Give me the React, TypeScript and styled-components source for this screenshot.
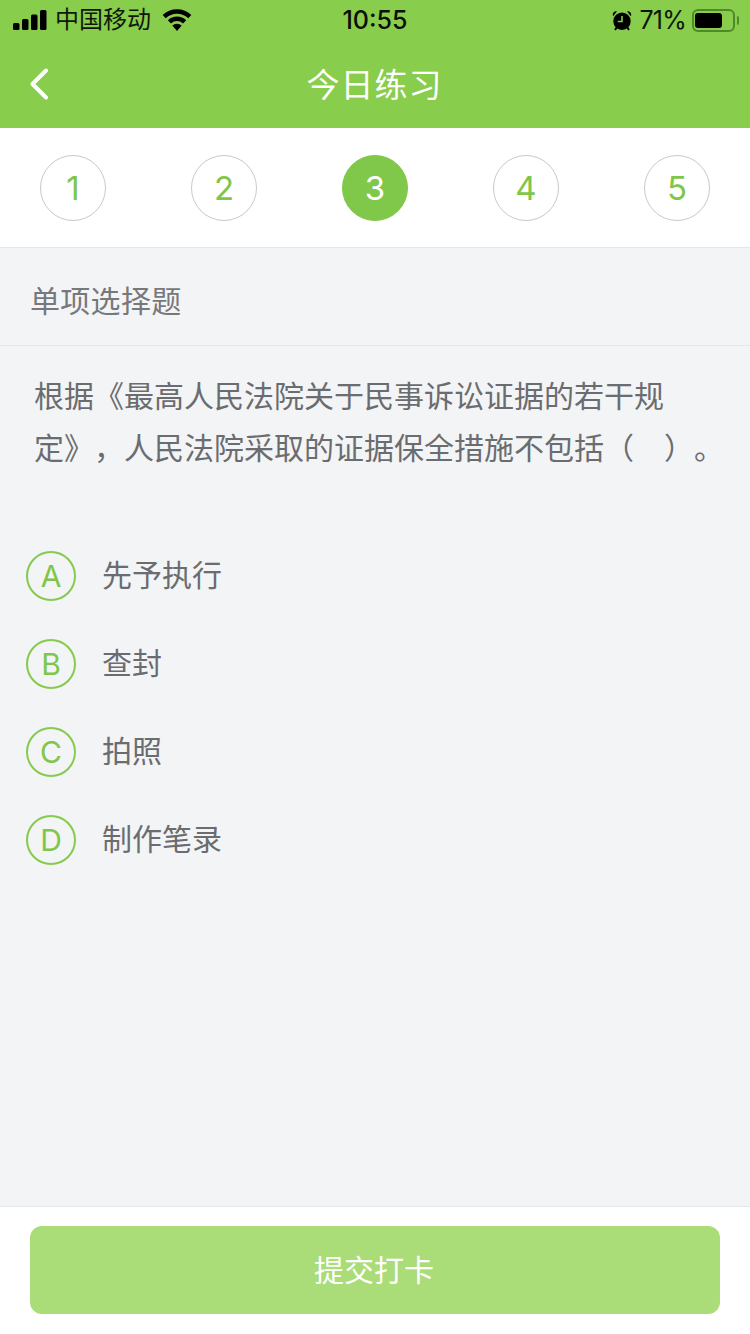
import React from 'react';
import styled, { createGlobalStyle } from 'styled-components';

const steps = [1, 2, 3, 4, 5];
const current = 3;

const options = [
  { key: 'A', text: '先予执行' },
  { key: 'B', text: '查封' },
  { key: 'C', text: '拍照' },
  { key: 'D', text: '制作笔录' },
];

export default function App() {
  return (
    <Page>
      <GlobalStyle />
      <Header>
        <StatusBar>
          <StatusSide>
            <Signal viewBox="0 0 34 20">
              <rect x="0" y="13" width="6.500" height="7" rx="1.500" />
              <rect x="9" y="9" width="6.500" height="11" rx="1.500" />
              <rect x="18" y="4.500" width="6.500" height="15.500" rx="1.500" />
              <rect x="27" y="0" width="6.500" height="20" rx="1.500" />
            </Signal>
            <Carrier>中国移动</Carrier>
            <WifiIcon viewBox="0 0 30 22">
              <path className="arc" d="M2.200 7.600A18.500 18.500 0 0 1 27.800 7.600" />
              <path className="arc" d="M7.400 12.800A11 11 0 0 1 22.600 12.800" />
              <path d="M15 22 10.300 16.600A6.800 6.800 0 0 1 19.700 16.600z" />
            </WifiIcon>
          </StatusSide>
          <Clock>10:55</Clock>
          <StatusSide>
            <AlarmIcon viewBox="0 0 20 21">
              <path d="M1.200 6.200C-.200 3.800 1.800.600 5 1.200z" />
              <path d="M18.800 6.200C20.200 3.800 18.200.600 15 1.200z" />
              <path d="M4.300 16.200 2.200 19.200 3.600 20.400 6 17.800zM15.700 16.200 17.800 19.200 16.400 20.400 14 17.800z" />
              <path
                fillRule="evenodd"
                d="M10 2.500a8.700 8.700 0 1 0 0 17.400 8.700 8.700 0 0 0 0-17.400zM9.200 6h1.600v6.200H5.800v-1.500h3.400z"
              />
            </AlarmIcon>
            <Percent>71%</Percent>
            <Battery>
              <BatteryLevel $level={73} />
              <BatteryCap />
            </Battery>
          </StatusSide>
        </StatusBar>
        <NavBar>
          <BackIcon viewBox="0 0 20 32">
            <path d="M17 2.500 3.500 16 17 29.500" />
          </BackIcon>
          <Title>今日练习</Title>
        </NavBar>
      </Header>

      <StepBar>
        {steps.map((n) => (
          <Step key={n} $active={n === current}>
            {n}
          </Step>
        ))}
      </StepBar>

      <Content>
        <QuestionType>单项选择题</QuestionType>
        <Question>
          根据《最高人民法院关于民事诉讼证据的若干规定》，人民法院采取的证据保全措施不包括（　）。
        </Question>
        <OptionList>
          {options.map((o) => (
            <OptionRow key={o.key}>
              <OptionBadge>{o.key}</OptionBadge>
              <OptionText>{o.text}</OptionText>
            </OptionRow>
          ))}
        </OptionList>
      </Content>

      <Footer>
        <SubmitButton type="button">提交打卡</SubmitButton>
      </Footer>
    </Page>
  );
}

const GlobalStyle = createGlobalStyle`
  html, body {
    margin: 0;
    padding: 0;
    background: #f3f4f6;
  }

  * {
    box-sizing: border-box;
  }
`;

const Page = styled.div`
  width: 750px;
  height: 1334px;
  display: flex;
  flex-direction: column;
  overflow: hidden;
  background: #f3f4f6;
  font-family: "Liberation Sans", "Noto Sans CJK SC", sans-serif;
  text-spacing-trim: space-all;
`;

const Header = styled.header`
  height: 128px;
  background: #88cd4c;
  display: flex;
  flex-direction: column;
`;

const StatusBar = styled.div`
  height: 40px;
  padding: 0 13px;
  display: flex;
  align-items: center;
  justify-content: space-between;
  position: relative;
  color: #0a0f04;
`;

const StatusSide = styled.div`
  display: flex;
  align-items: center;
`;

const Signal = styled.svg`
  width: 34px;
  height: 20px;
  fill: #000;
`;

const Carrier = styled.span`
  margin-left: 8px;
  font-size: 24px;
  line-height: 40px;
  color: #10180a;
`;

const WifiIcon = styled.svg`
  width: 30px;
  height: 22px;
  margin-left: 11px;
  fill: #000;

  .arc {
    fill: none;
    stroke: #000;
    stroke-width: 4.500;
  }
`;

const Clock = styled.span`
  position: absolute;
  left: 0;
  right: 0;
  text-align: center;
  font-size: 25px;
  font-weight: 500;
  font-family: "Inter", "Liberation Sans", sans-serif;
  line-height: 42px;
`;

const AlarmIcon = styled.svg`
  width: 20px;
  height: 21px;
  fill: #000;
`;

const Percent = styled.span`
  margin-left: 7px;
  font-size: 25px;
  font-family: "Inter", "Liberation Sans", sans-serif;
  font-weight: 400;
  letter-spacing: -0.75px;
  color: #0e1608;
`;

const Battery = styled.div`
  position: relative;
  width: 43px;
  height: 23px;
  margin: 0 2px 0 6px;
  padding: 2px 1px;
  border: 2px solid #4f8a2a;
  border-radius: 6px;
`;

const BatteryLevel = styled.div<{ $level: number }>`
  width: ${(props) => props.$level}%;
  height: 100%;
  background: #000;
  border-radius: 3px;
`;

const BatteryCap = styled.div`
  position: absolute;
  right: -6px;
  top: 5px;
  width: 2px;
  height: 9px;
  border-radius: 0 2px 2px 0;
  background: #4f8a2a;
`;

const NavBar = styled.div`
  flex: 1;
  position: relative;
  display: flex;
  align-items: center;
  justify-content: center;
`;

const BackIcon = styled.svg`
  position: absolute;
  left: 29px;
  top: 28px;
  width: 20px;
  height: 32px;
  fill: none;
  stroke: #fff;
  stroke-width: 4;
  stroke-linecap: round;
  stroke-linejoin: round;
`;

const Title = styled.h1`
  margin: 0 1px 0 0;
  font-size: 33px;
  font-weight: 400;
  color: #fff;
  letter-spacing: 1px;
  position: relative;
  top: -1px;
`;

const StepBar = styled.div`
  height: 120px;
  padding: 27px 40px 0;
  display: flex;
  justify-content: space-between;
  background: #fff;
  border-bottom: 1px solid #e6e6e8;
`;

const Step = styled.div<{ $active: boolean }>`
  width: 66px;
  height: 66px;
  border-radius: 50%;
  display: flex;
  align-items: center;
  justify-content: center;
  font-size: 33px;
  font-family: "Inter", "Liberation Sans", sans-serif;
  font-weight: 400;
  color: ${(props) => (props.$active ? '#fff' : '#7fc64a')};
  background: ${(props) => (props.$active ? '#7fc84a' : '#fff')};
  border: 1px solid ${(props) => (props.$active ? '#7fc84a' : '#c9c9c9')};
`;

const Content = styled.main`
  flex: 1;
  display: flex;
  flex-direction: column;
`;

const QuestionType = styled.div`
  height: 98px;
  padding: 5px 30px 0;
  display: flex;
  align-items: center;
  font-size: 30px;
  letter-spacing: 0.3px;
  color: #77787b;
  border-bottom: 1px solid #e6e7e9;
`;

const Question = styled.p`
  margin: 0;
  padding: 25px 25px 0 34px;
  font-size: 30px;
  line-height: 52px;
  color: #6b6c6f;
`;

const OptionList = styled.div`
  margin-top: 76px;
  padding-left: 26px;
  display: flex;
  flex-direction: column;
  gap: 38px;
`;

const OptionRow = styled.div`
  display: flex;
  align-items: center;
  height: 50px;
`;

const OptionBadge = styled.span`
  width: 50px;
  height: 50px;
  border-radius: 50%;
  border: 2px solid #85ca4c;
  display: flex;
  align-items: center;
  justify-content: center;
  font-size: 30px;
  font-family: "Inter", "Liberation Sans", sans-serif;
  font-weight: 400;
  color: #7fc64a;
`;

const OptionText = styled.span`
  margin-left: 26px;
  font-size: 30px;
  color: #6b6c6f;
  position: relative;
  top: -3px;
`;

const Footer = styled.footer`
  height: 128px;
  padding: 19px 30px 0;
  background: #fff;
  border-top: 1px solid #e6e7e9;
`;

const SubmitButton = styled.button`
  display: block;
  width: 690px;
  height: 88px;
  padding: 0 2px 5px 0;
  border: 0;
  border-radius: 12px;
  background: #aadc78;
  color: #fff;
  font-family: inherit;
  font-size: 30px;
`;
